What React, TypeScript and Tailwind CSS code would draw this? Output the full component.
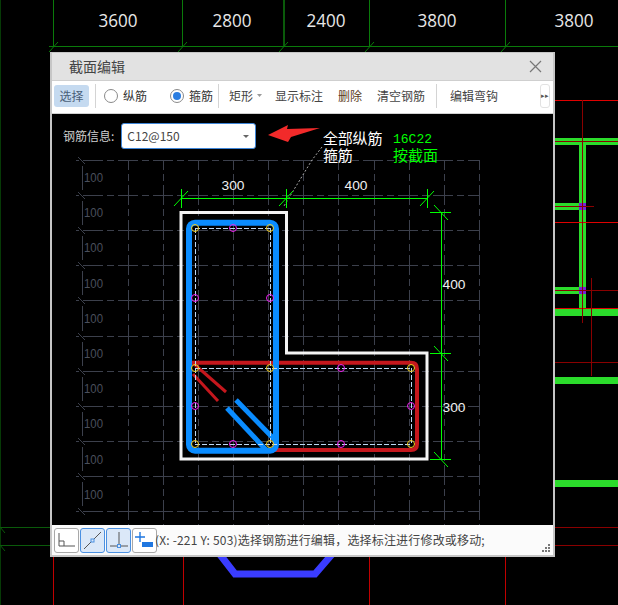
import React from 'react';

const UI_FONT = "font-['Noto_Sans_CJK_SC','Noto_Sans',sans-serif]";
const CAD_FONT = "'Liberation Sans','Noto Sans CJK SC',sans-serif";

const gridXs = [128, 163, 198, 233, 268, 303, 338, 374, 409, 444, 479];
const gridYs = [160, 195, 230, 265, 300, 336, 371, 406, 441, 476, 511];
const gridLabels = [178, 213, 248, 284, 319, 354, 389, 424, 460, 495];

const yellowBars = [
  [195, 228], [270, 228], [195, 368], [270, 368], [195, 444], [270, 444], [411, 368], [411, 444],
];
const magentaBars = [
  [233, 228], [195, 298], [270, 298], [195, 406], [233, 444], [341, 368], [411, 406], [341, 444],
];

function Background() {
  const axes = [
    { x: 53, label: '3600', lx: 118 },
    { x: 182, label: '2800', lx: 232 },
    { x: 283, label: '2400', lx: 326 },
    { x: 369, label: '3800', lx: 437 },
    { x: 505, label: '3800', lx: 574 },
  ];
  return (
    <svg className="absolute inset-0" width="618" height="605" viewBox="0 0 618 605">
      <g stroke="#0a7a0a" strokeWidth="1" shapeRendering="crispEdges">
        {axes.map((a) => (
          <line
            key={a.lx}
            x1={a.x + 0.5}
            y1="0"
            x2={a.x + 0.5}
            y2="47"
            stroke={a.x === 283 ? '#0a5a0a' : '#0a7a0a'}
            strokeWidth={a.x === 283 ? 2 : 1}
          />
        ))}
        <line x1="49" y1="46.500" x2="618" y2="46.500" />
      </g>
      <g stroke="#0a7a0a" strokeWidth="1">
        {axes.map((a) => (
          <line key={a.lx} x1={a.x - 4} y1="52" x2={a.x + 5} y2="42" />
        ))}
      </g>
      <g fill="#e8e8e8" fontSize="19" fontFamily="'Open Sans',sans-serif" textAnchor="middle">
        {axes.map((a) => (
          <text key={a.lx} x={a.lx} y="27" textLength="39" lengthAdjust="spacingAndGlyphs">
            {a.label}
          </text>
        ))}
      </g>

      {/* left edge */}
      <g stroke="#0a5a0a" shapeRendering="crispEdges">
        <line x1="0.500" y1="0" x2="0.500" y2="605" stroke="#063a06" />
        <line x1="0" y1="527.500" x2="50" y2="527.500" />
        <line x1="0" y1="545.500" x2="50" y2="545.500" />
      </g>
      <g stroke="#0a5a0a">
        <line x1="0" y1="527" x2="5" y2="533" />
        <line x1="0" y1="545" x2="5" y2="551" />
      </g>

      {/* right side beams */}
      <g fill="#2bdc2b" shapeRendering="crispEdges">
        <rect x="555" y="138" width="63" height="7" />
        <rect x="579" y="145" width="7" height="163" />
        <rect x="555" y="203" width="24" height="7" />
        <rect x="555" y="287" width="24" height="7" />
        <rect x="555" y="308" width="63" height="8" />
        <rect x="555" y="377" width="63" height="7" />
        <rect x="555" y="480" width="63" height="7" />
      </g>
      <g fill="#7a1fd6" shapeRendering="crispEdges">
        <rect x="579" y="203" width="7" height="7" />
        <rect x="579" y="287" width="7" height="7" />
      </g>
      <g stroke="#e00000" shapeRendering="crispEdges">
        <line x1="555" y1="100.500" x2="618" y2="100.500" />
        <line x1="555" y1="222.500" x2="618" y2="222.500" />
        <line x1="555" y1="308.500" x2="618" y2="308.500" />
      </g>
      <g stroke="#8a0000" shapeRendering="crispEdges">
        <line x1="582.500" y1="100" x2="582.500" y2="323" />
        <line x1="555" y1="141.500" x2="618" y2="141.500" />
        <line x1="555" y1="206.500" x2="594" y2="206.500" />
        <line x1="555" y1="290.500" x2="618" y2="290.500" />
        <line x1="591.500" y1="278" x2="591.500" y2="376" />
        <line x1="555" y1="362.500" x2="618" y2="362.500" />
        <line x1="555" y1="527.500" x2="618" y2="527.500" />
        <line x1="555" y1="545.500" x2="618" y2="545.500" />
      </g>

      {/* below the dialog */}
      <g stroke="#c00000" shapeRendering="crispEdges">
        <line x1="53.500" y1="556" x2="53.500" y2="605" />
        <line x1="183.500" y1="556" x2="183.500" y2="605" />
        <line x1="369.500" y1="556" x2="369.500" y2="605" />
        <line x1="505.500" y1="556" x2="505.500" y2="605" />
      </g>
      <polyline points="218,552 235,574 315,574 334,552" fill="none" stroke="#3a3cff" strokeWidth="7" />
    </svg>
  );
}

function SectionDrawing() {
  return (
    <svg className="absolute inset-0" width="501" height="411" viewBox="52 114 501 411">
      {/* grid */}
      <g stroke="#3c404c" strokeWidth="1" strokeDasharray="20 4 7 4" shapeRendering="crispEdges">
        {gridXs.map((x) => (
          <line key={x} x1={x + 0.5} y1="160" x2={x + 0.5} y2="525" strokeDashoffset="10" />
        ))}
        {gridYs.map((y) => (
          <line key={y} x1="76" y1={y + 0.5} x2="479" y2={y + 0.5} strokeDashoffset="28" />
        ))}
      </g>
      <g stroke="#3c404c" strokeWidth="1">
        {gridYs.map((y, i) => (
          <g key={y}>
            <line x1="78" y1={y - 3} x2="85" y2={y + 4} />
            {i < gridYs.length - 1 && (
              <line x1="82.500" y1={y + 6} x2="82.500" y2={gridYs[i + 1] - 5} shapeRendering="crispEdges" />
            )}
          </g>
        ))}
      </g>
      <g fill="#4a4f5c" fontSize="13" fontFamily={CAD_FONT}>
        {gridLabels.map((y) => (
          <text key={y} x="84" y={y + 4} textLength="19" lengthAdjust="spacingAndGlyphs">100</text>
        ))}
      </g>

      {/* leader */}
      <polyline points="322,147 312,160 284,206" fill="none" stroke="#aaaaaa" strokeWidth="1" strokeDasharray="2 2" />

      {/* outline */}
      <path d="M181 212.500H286.500V353H427V459H181Z" fill="none" stroke="#f4f4f4" strokeWidth="3" />

      {/* red stirrup */}
      <path d="M192 362.700H411Q417 362.700 417 369V444Q417 450 411 450H266" fill="none" stroke="#c4171d" strokeWidth="4" />
      <line x1="193" y1="363" x2="226" y2="392" stroke="#c4171d" strokeWidth="3" />
      <line x1="193" y1="374" x2="218" y2="401" stroke="#c4171d" strokeWidth="3" />

      {/* blue stirrup */}
      <rect x="189" y="222.700" width="87" height="228" rx="6" fill="none" stroke="#0a8cff" strokeWidth="6" />
      <line x1="227" y1="408" x2="267" y2="451" stroke="#0a8cff" strokeWidth="5" />
      <line x1="236" y1="400" x2="275" y2="440" stroke="#0a8cff" strokeWidth="5" />

      {/* inner dashed line */}
      <g stroke="#bcd8f5" strokeWidth="1" strokeDasharray="5 2" shapeRendering="crispEdges">
        <line x1="195.500" y1="228" x2="195.500" y2="444" />
        <line x1="270.500" y1="228" x2="270.500" y2="444" />
        <line x1="195" y1="228.500" x2="270" y2="228.500" />
        <line x1="195" y1="368.500" x2="411" y2="368.500" />
        <line x1="195" y1="444.500" x2="411" y2="444.500" />
        <line x1="411.500" y1="368" x2="411.500" y2="444" />
      </g>

      {/* bars */}
      {yellowBars.map(([x, y]) => (
        <circle key={`${x}-${y}`} cx={x} cy={y} r="3.500" fill="none" stroke="#f5d020" strokeWidth="1" />
      ))}
      {magentaBars.map(([x, y]) => (
        <circle key={`${x}-${y}`} cx={x} cy={y} r="3.500" fill="none" stroke="#f020f0" strokeWidth="1" />
      ))}

      {/* dimensions */}
      <g stroke="#00ff00" strokeWidth="1" shapeRendering="crispEdges">
        <line x1="181" y1="198.500" x2="427" y2="198.500" />
        <line x1="181.500" y1="189" x2="181.500" y2="208" />
        <line x1="286.500" y1="189" x2="286.500" y2="208" />
        <line x1="427.500" y1="189" x2="427.500" y2="208" />
        <line x1="441.500" y1="212" x2="441.500" y2="460" />
        <line x1="430" y1="212.500" x2="451" y2="212.500" />
        <line x1="430" y1="353.500" x2="451" y2="353.500" />
        <line x1="430" y1="459.500" x2="451" y2="459.500" />
      </g>
      <g stroke="#00ff00" strokeWidth="1">
        <line x1="174" y1="206" x2="188" y2="191" />
        <line x1="279" y1="206" x2="293" y2="191" />
        <line x1="420" y1="206" x2="434" y2="191" />
        <line x1="434" y1="205" x2="448" y2="220" />
        <line x1="434" y1="346" x2="448" y2="361" />
        <line x1="434" y1="452" x2="448" y2="467" />
      </g>
      <g fill="#f0f0f0" fontSize="13" fontFamily={CAD_FONT} textAnchor="middle">
        <text x="233" y="190" textLength="23" lengthAdjust="spacingAndGlyphs">300</text>
        <text x="356" y="190" textLength="23" lengthAdjust="spacingAndGlyphs">400</text>
        <text x="454" y="289" textLength="23" lengthAdjust="spacingAndGlyphs">400</text>
        <text x="454" y="412" textLength="23" lengthAdjust="spacingAndGlyphs">300</text>
      </g>

      {/* notes */}
      <g fill="#ffffff" fontSize="15" fontFamily={CAD_FONT}>
        <text x="323" y="144" letterSpacing="-0.200">全部纵筋</text>
        <text x="323" y="161" letterSpacing="-0.200">箍筋</text>
      </g>
      <text x="393" y="143" fill="#00ff00" fontSize="13" fontFamily="'Liberation Mono',monospace" textLength="39" lengthAdjust="spacingAndGlyphs">16C22</text>
      <text x="393" y="161" fill="#00ff00" fontSize="15" fontFamily={CAD_FONT}>按截面</text>

      {/* arrow */}
      <polygon points="268,135 288,125 287,129 320,128 291,137 288,142" fill="#f22a2a" />
    </svg>
  );
}

function Radio({ label, checked }: { label: string; checked?: boolean }) {
  return (
    <div className="flex items-center gap-[5px]">
      <span className="flex h-[14px] w-[14px] items-center justify-center rounded-full border border-[#8a8a8a] bg-white">
        {checked && <span className="h-[8px] w-[8px] rounded-full bg-[#2a7de1]" />}
      </span>
      <span className="text-[#333]">{label}</span>
    </div>
  );
}

function Separator() {
  return <span className="h-[24px] w-px bg-[#d4d4d4]" />;
}

function SnapButton({ active, children }: { active?: boolean; children: React.ReactNode }) {
  return (
    <button
      className={
        active
          ? 'flex h-[25px] w-[25px] items-center justify-center rounded-[3px] border border-[#4a90e2] bg-[#dbe8f8]'
          : 'flex h-[25px] w-[25px] items-center justify-center rounded-[3px] border border-[#a8a8a8] bg-white'
      }
    >
      <svg width="23" height="23" viewBox="0 0 23 23">{children}</svg>
    </button>
  );
}

export default function App() {
  return (
    <div className={`relative h-[605px] w-[618px] overflow-hidden bg-black ${UI_FONT}`}>
      <Background />

      <div className="absolute left-[50px] top-[52px] flex h-[505px] w-[505px] flex-col border-x-2 border-t border-b-2 border-[#c6c6c6] bg-white">
        <div className="flex h-[27px] items-center justify-between bg-[#e2e2e2] pl-[17px] pr-[11px]">
          <span className="text-[14px] text-[#444]">截面编辑</span>
          <svg width="13" height="13" viewBox="0 0 13 13">
            <path d="M1 1L12 12M12 1L1 12" stroke="#777" strokeWidth="1.200" />
          </svg>
        </div>
        <div className="h-[1px] bg-[#cfcfcf]" />

        <div className="flex h-[33px] items-center border-b border-[#d0d0d0] bg-white pb-[3px] pl-[2px] text-[12px] text-[#444]">
          <button className="h-[22px] w-[35px] rounded-[3px] bg-[#c5daf0] text-[#4a6078]">选择</button>
          <span className="ml-[6px] mr-[8px] flex"><Separator /></span>
          <Radio label="纵筋" />
          <span className="w-[23px]" />
          <Radio label="箍筋" checked />
          <span className="ml-[5px] mr-[10px] flex"><Separator /></span>
          <span className="text-[#444]">矩形</span>
          <svg className="ml-[4px]" width="5" height="3" viewBox="0 0 5 3"><path d="M0 0H5L2.500 3Z" fill="#999" /></svg>
          <span className="ml-[13px]">显示标注</span>
          <span className="ml-[15px] text-[#5a3a20]">删除</span>
          <span className="ml-[15px]">清空钢筋</span>
          <span className="ml-[11px] mr-[13px] flex"><Separator /></span>
          <span>编辑弯钩</span>
          <span className="ml-[42px] flex h-[24px] w-[10px] items-center justify-center rounded-[3px] border border-[#e2e2e2] text-[7px] text-[#555]">▸▸</span>
        </div>

        <div className="relative flex-1 bg-black">
          <SectionDrawing />
          <div className="absolute left-[11px] top-[9px] flex items-center gap-[7px]">
            <span className="text-[12px] text-[#cfcfcf]">钢筋信息:</span>
            <div className="flex h-[26px] w-[135px] items-center justify-between rounded-[3px] border border-[#3f86d8] bg-white pl-[5px] pr-[6px] text-[12px] text-[#444]">
              <span>C12@150</span>
              <svg width="6" height="3" viewBox="0 0 6 3"><path d="M0 0H6L3 3Z" fill="#666" /></svg>
            </div>
          </div>
        </div>

        <div className="relative flex h-[30px] items-center gap-px bg-[#fbfbfb] pl-[2px] text-[12px] text-[#444]">
          <SnapButton>
            <path d="M4 4V17H20M4 12H9V17" fill="none" stroke="#555" />
          </SnapButton>
          <SnapButton active>
            <path d="M3 20L20 3" stroke="#555" />
            <rect x="10" y="10" width="3" height="3" fill="#dbe8f8" stroke="#4a90e2" />
          </SnapButton>
          <SnapButton active>
            <path d="M12 3V17M3 17H21" stroke="#555" />
            <rect x="10.500" y="15.500" width="3" height="3" fill="#dbe8f8" stroke="#4a90e2" />
          </SnapButton>
          <SnapButton>
            <path d="M7 3V13M2 8H12" stroke="#1f77e0" strokeWidth="1.400" />
            <rect x="9" y="13" width="11" height="5" fill="#1f77e0" />
          </SnapButton>
          <span className="-ml-[3px] whitespace-nowrap tracking-[0.180px]">(X: -221 Y: 503)选择钢筋进行编辑，选择标注进行修改或移动;</span>
          <svg className="absolute bottom-[3px] right-[3px]" width="8" height="8" viewBox="0 0 8 8" fill="#777">
            <rect x="6" y="0" width="2" height="2" />
            <rect x="3" y="3" width="2" height="2" />
            <rect x="6" y="3" width="2" height="2" />
            <rect x="0" y="6" width="2" height="2" />
            <rect x="3" y="6" width="2" height="2" />
            <rect x="6" y="6" width="2" height="2" />
          </svg>
        </div>
      </div>
    </div>
  );
}
